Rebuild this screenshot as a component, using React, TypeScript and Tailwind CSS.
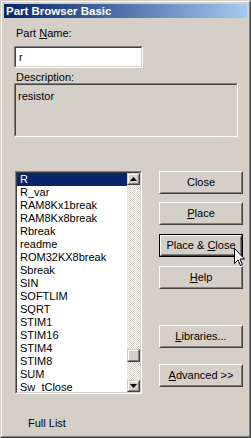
import React from "react";

const items = [
  "R",
  "R_var",
  "RAM8Kx1break",
  "RAM8Kx8break",
  "Rbreak",
  "readme",
  "ROM32KX8break",
  "Sbreak",
  "SIN",
  "SOFTLIM",
  "SQRT",
  "STIM1",
  "STIM16",
  "STIM4",
  "STIM8",
  "SUM",
  "Sw_tClose",
];

function Btn({ children, def = false, className = "" }: { children: React.ReactNode; def?: boolean; className?: string }) {
  const inner = (
    <div className="h-full w-full border border-t-white border-l-white border-r-[#404040] border-b-[#404040]">
      <div className="h-full w-full border border-t-[#d4d0c8] border-l-[#d4d0c8] border-r-[#808080] border-b-[#808080] flex items-center justify-center text-[11px] leading-[13px] text-black">
        {children}
      </div>
    </div>
  );
  if (def) {
    return <div className={"w-[84px] h-[23px] border border-black " + className}>{inner}</div>;
  }
  return <div className={"w-[84px] h-[23px] " + className}>{inner}</div>;
}

function Sunken({ className = "", innerClass = "", children }: { className?: string; innerClass?: string; children?: React.ReactNode }) {
  return (
    <div className={"border border-t-[#808080] border-l-[#808080] border-r-white border-b-white " + className}>
      <div className={"h-full w-full border border-t-[#404040] border-l-[#404040] border-r-[#d4d0c8] border-b-[#d4d0c8] " + innerClass}>
        {children}
      </div>
    </div>
  );
}

const U = ({ children }: { children: React.ReactNode }) => (
  <span className="underline underline-offset-[1px] decoration-1">{children}</span>
);

function ScrollBtn({ up }: { up: boolean }) {
  return (
    <div className="w-[13px] h-[12px] bg-[#d4d0c8] border border-t-[#d4d0c8] border-l-[#d4d0c8] border-r-[#404040] border-b-[#404040]">
      <div className="h-full w-full border border-t-white border-l-white border-r-[#808080] border-b-[#808080] flex items-center justify-center">
        <svg width="7" height="4" viewBox="0 0 7 4">
          {up ? <path d="M3.5 0 L7 4 L0 4 Z" fill="#000" /> : <path d="M0 0 L7 0 L3.5 4 Z" fill="#000" />}
        </svg>
      </div>
    </div>
  );
}

export default function App() {
  return (
    <div
      className="relative w-[251px] h-[438px] border border-t-[#d4d0c8] border-l-[#d4d0c8] border-r-[#404040] border-b-[#404040] bg-[#d4d0c8] select-none"
      style={{ fontFamily: '"Liberation Sans", Arial, sans-serif' }}
    >
      <div className="h-full w-full border border-t-white border-l-white border-r-[#808080] border-b-[#808080] p-[2px] flex flex-col">
        {/* Title bar */}
        <div className="h-[14px] bg-gradient-to-r from-[#0a246a] to-[#a6caf0] pl-[2px] text-white font-bold text-[11.5px] leading-[14px] whitespace-nowrap">
          Part Browser Basic
        </div>

        {/* Body */}
        <div className="flex flex-col text-[11px] text-black">
          <div className="ml-[12px] mt-[9px] leading-[13px]">
            Part <U>N</U>ame:
          </div>
          <Sunken className="ml-[10px] mt-[6px] w-[129px] h-[22px]" innerClass="bg-white flex items-center pl-[3px] pt-[1px]">
            <span className="leading-[13px]">r</span>
          </Sunken>
          <div className="ml-[12px] mt-[3px] leading-[12px]">Description:</div>
          <Sunken className="ml-[10px] w-[224px] h-[54px]" innerClass="bg-[#d4d0c8] pl-[2px] pt-[3px]">
            <span className="leading-[13px]">resistor</span>
          </Sunken>

          <div className="flex mt-[34px]">
            {/* List box */}
            <Sunken className="ml-[11px] w-[127px] h-[223px]" innerClass="bg-white flex overflow-hidden">
              <div className="flex-1 flex flex-col overflow-hidden">
                {items.map((it, i) => (
                  <div
                    key={it}
                    className={
                      "h-[13px] shrink-0 leading-[12px] pl-[3px] whitespace-nowrap " +
                      (i === 0 ? "bg-[#0a246a] text-white" : "text-black")
                    }
                  >
                    {it}
                  </div>
                ))}
              </div>
              <div className="w-[13px] flex flex-col">
                <ScrollBtn up />
                <div className="flex-1 flex flex-col bg-[repeating-conic-gradient(#ffffff_0%_25%,#d4d0c8_0%_50%)] bg-[length:2px_2px]">
                  <div className="mt-[164px] w-[13px] h-[13px] bg-[#d4d0c8] border border-t-[#d4d0c8] border-l-[#d4d0c8] border-r-[#404040] border-b-[#404040]">
                    <div className="h-full w-full border border-t-white border-l-white border-r-[#808080] border-b-[#808080]" />
                  </div>
                </div>
                <ScrollBtn up={false} />
              </div>
            </Sunken>

            {/* Buttons */}
            <div className="ml-[17px] flex flex-col">
              <Btn>Close</Btn>
              <Btn className="mt-[8px]">
                <span>
                  <U>P</U>lace
                </span>
              </Btn>
              <Btn def className="mt-[9px]">
                <span>
                  Place &amp; <U>C</U>lose
                </span>
              </Btn>
              <Btn className="mt-[9px]">
                <span>
                  <U>H</U>elp
                </span>
              </Btn>
              <Btn className="mt-[36px]">
                <span>
                  <U>L</U>ibraries...
                </span>
              </Btn>
              <Btn className="mt-[16px]">
                <span>
                  <U>A</U>dvanced &gt;&gt;
                </span>
              </Btn>
            </div>
          </div>

          <div className="ml-[24px] mt-[23px] leading-[13px]">Full List</div>
        </div>
      </div>

      {/* Mouse cursor */}
      <svg className="absolute left-[233px] top-[247px]" width="12" height="19" viewBox="0 0 12 19">
        <path d="M0.5 0.5 L0.5 15.5 L4 12 L6.5 17.5 L8.5 16.5 L6 11 L10.5 11 Z" fill="#fff" stroke="#000" strokeWidth="1" />
      </svg>
    </div>
  );
}
